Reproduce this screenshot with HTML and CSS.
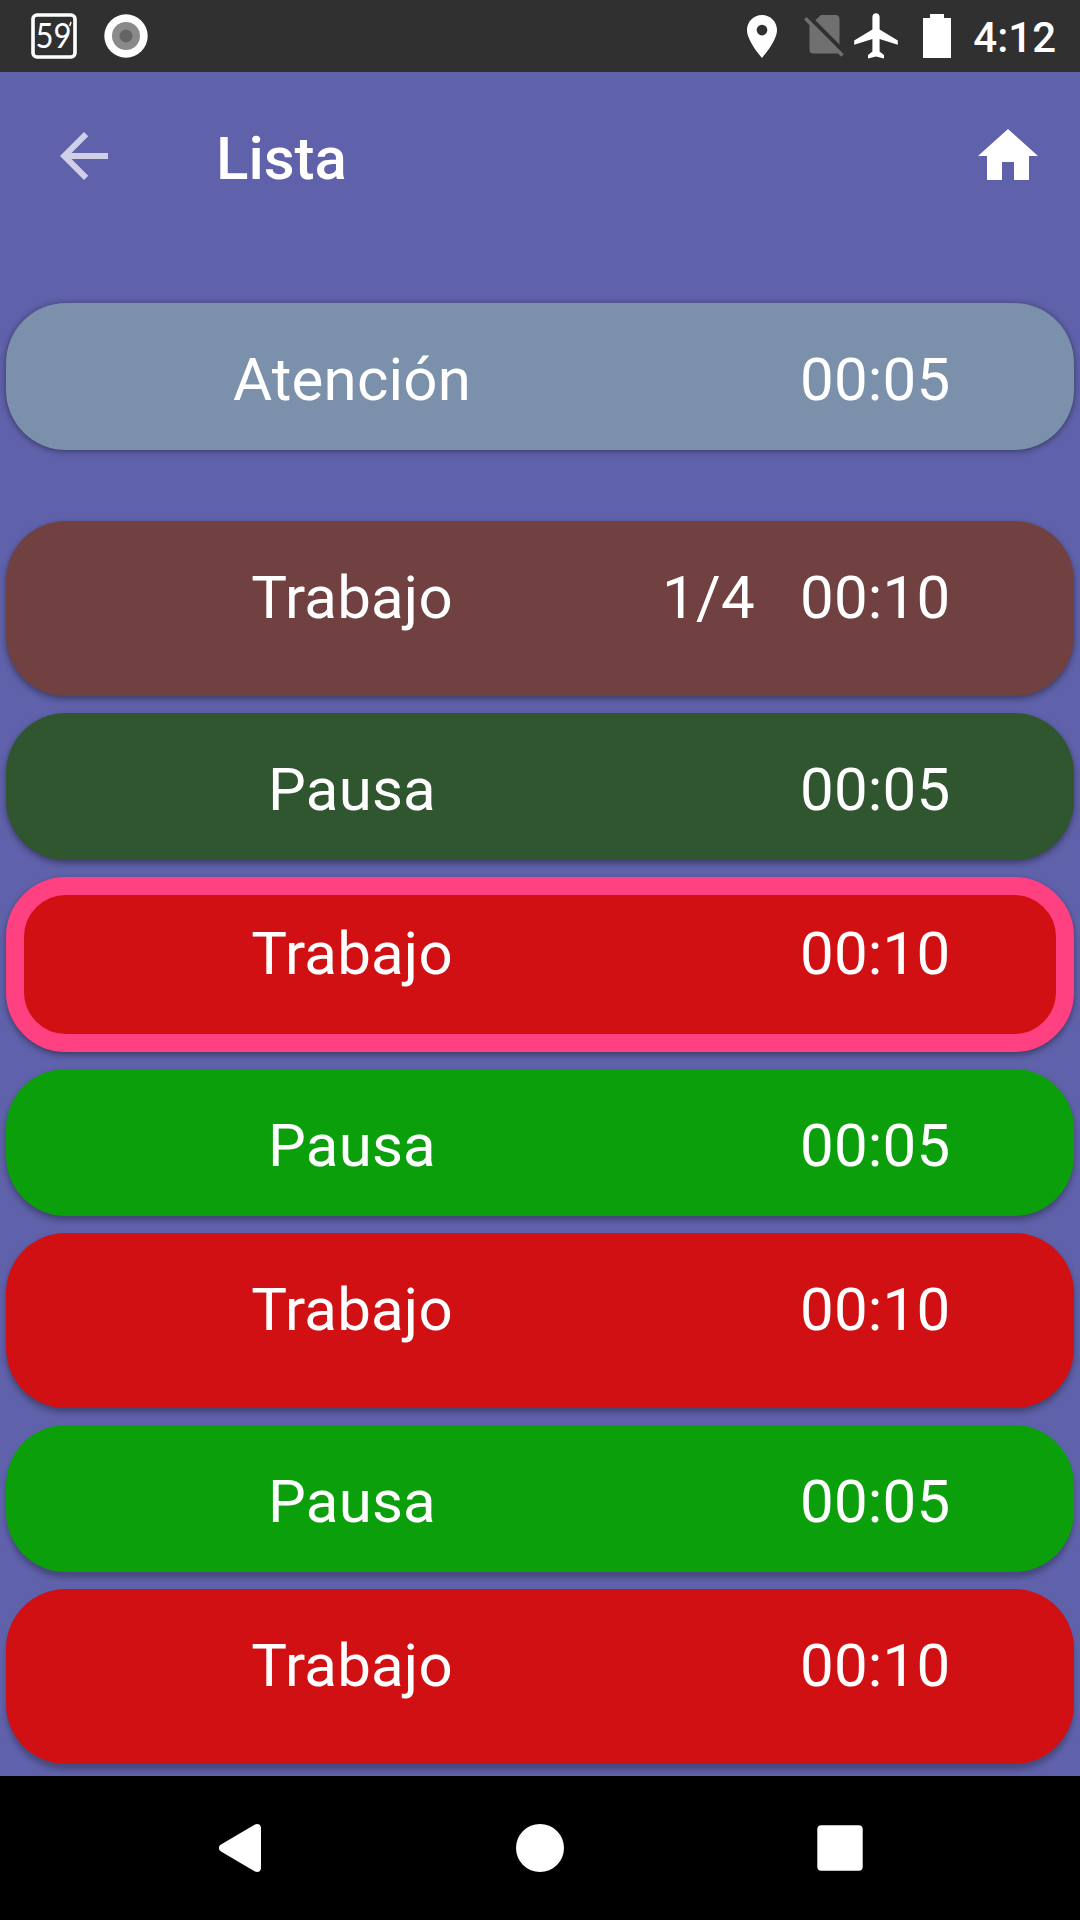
FILE: index.html
```html
<!DOCTYPE html>
<html lang="es">
<head>
  <meta charset="UTF-8" />
  <meta name="viewport" content="width=device-width, initial-scale=1.0" />
  <title>Lista</title>
  <link rel="stylesheet" href="styles.css">
</head>
<body>
  <!-- Barra de estado -->
  <div class="status-bar">
    <div class="notifications">
      <svg width="46" height="46" viewBox="0 0 46 46">
        <rect x="2" y="2" width="42" height="42" rx="4" fill="none" stroke="#fff" stroke-width="3.600" />
        <text class="badge-number" x="4.500" y="34.500" textLength="36" lengthAdjust="spacingAndGlyphs">59</text>
        <path d="M40 9l-1.300 4" stroke="#fff" stroke-width="1.500" />
      </svg>
      <svg width="44" height="44" viewBox="0 0 44 44">
        <circle cx="22" cy="22" r="21.700" fill="#fff" />
        <circle cx="22" cy="22" r="14" fill="#8a8a8a" />
        <circle cx="22" cy="22" r="6.500" fill="#646464" />
      </svg>
    </div>
    <div class="system-icons">
      <svg class="icon-place" width="30" height="43" viewBox="5 2 14 20">
        <path fill="#fff" d="M12 2C8.130 2 5 5.130 5 9c0 5.250 7 13 7 13s7-7.750 7-13c0-3.870-3.130-7-7-7zm0 9.500a2.500 2.500 0 0 1 0-5 2.500 2.500 0 0 1 0 5z" />
      </svg>
      <svg class="icon-sim" width="40" height="42" viewBox="0 0 40 42">
        <path fill="#707070" d="M17 0h14.500a4 4 0 0 1 4 4v25.500L11.300 5.300zM5.500 9.500L34 38a4 4 0 0 1-2 .5H9.500a4 4 0 0 1-4-4z" />
        <path d="M1.300 3.300L38.500 40.500" stroke="#707070" stroke-width="3.600" />
      </svg>
      <svg class="icon-plane" width="44" height="46" viewBox="0 0 44 46">
        <path fill="#fff" d="M22 .3c-2 0-3.600 1.600-3.600 3.600V16.500L.2 27.500v4.300l18.200-5.800v12.400L14 42v3.600l8-2 8 2V42l-4.400-3.600V26l18.200 5.800v-4.300L25.600 16.500V3.900c0-2-1.600-3.600-3.600-3.600z" />
      </svg>
      <svg class="icon-battery" width="28" height="44" viewBox="0 0 28 44">
        <path fill="#fff" d="M7 0h14v4h7v40H0V4h7z" />
      </svg>
      <span class="clock">4:12</span>
    </div>
  </div>

  <!-- Cabecera -->
  <header class="toolbar">
    <svg class="back" width="72" height="72" viewBox="0 0 24 24">
      <path d="M20 11H7.830l5.590-5.590L12 4l-8 8 8 8 1.410-1.410L7.830 13H20v-2z" />
    </svg>
    <h1>Lista</h1>
    <svg class="home" width="72" height="72" viewBox="0 0 24 24">
      <path d="M10 20v-6h4v6h5v-8h3L12 3 2 12h3v8z" />
    </svg>
  </header>

  <!-- Lista de intervalos -->
  <main class="list">
    <div class="card attention">
      <span class="name">Atención</span>
      <span class="round"></span>
      <span class="time">00:05</span>
    </div>
    <div class="card work done">
      <span class="name">Trabajo</span>
      <span class="round">1/4</span>
      <span class="time">00:10</span>
    </div>
    <div class="card rest done">
      <span class="name">Pausa</span>
      <span class="round"></span>
      <span class="time">00:05</span>
    </div>
    <div class="card work current">
      <span class="name">Trabajo</span>
      <span class="round"></span>
      <span class="time">00:10</span>
    </div>
    <div class="card rest">
      <span class="name">Pausa</span>
      <span class="round"></span>
      <span class="time">00:05</span>
    </div>
    <div class="card work">
      <span class="name">Trabajo</span>
      <span class="round"></span>
      <span class="time">00:10</span>
    </div>
    <div class="card rest">
      <span class="name">Pausa</span>
      <span class="round"></span>
      <span class="time">00:05</span>
    </div>
    <div class="card work">
      <span class="name">Trabajo</span>
      <span class="round"></span>
      <span class="time">00:10</span>
    </div>
  </main>

  <!-- Botones de navegación -->
  <nav class="nav-bar">
    <svg width="42" height="48" viewBox="0 0 42 48">
      <path fill="#fff" d="M2 20.600L35.500.8c3-1.700 6.500-.5 6.500 3v40.400c0 3.500-3.500 4.700-6.500 3L2 27.400c-2.700-1.600-2.700-5.200 0-6.800z" />
    </svg>
    <svg width="48" height="48" viewBox="0 0 48 48">
      <circle cx="24" cy="24" r="24" fill="#fff" />
    </svg>
    <svg width="46" height="46" viewBox="0 0 46 46">
      <rect x=".3" y=".3" width="45.400" height="45.400" rx="4" fill="#fff" />
    </svg>
  </nav>
</body>
</html>
```
FILE: styles.css
```css
* {
  box-sizing: border-box;
}

body {
  margin: 0;
  height: 1920px;
  display: flex;
  flex-direction: column;
  overflow: hidden;
  font-family: Roboto, sans-serif;
  color: #fff;
  background-color: #5f61aa;
}

svg {
  display: block;
  flex: none;
}

.status-bar {
  height: 72px;
  padding: 0 24px 0 31px;
  display: flex;
  align-items: center;
  justify-content: space-between;
  background-color: #303030;
}

.notifications,
.system-icons {
  display: flex;
  align-items: center;
}

.notifications {
  gap: 27px;
}

.badge-number {
  font-family: Lato, sans-serif;
  font-size: 34px;
  font-weight: 400;
  fill: #fff;
}

.icon-sim {
  margin-left: 27px;
  margin-right: 10px;
}

.icon-battery {
  margin-left: 25px;
}

.clock {
  margin-left: 22px;
  padding-top: 3px;
  font-size: 42px;
  font-weight: 500;
  line-height: 50px;
}

.toolbar {
  height: 168px;
  padding: 0 36px 0 48px;
  display: flex;
  align-items: center;
}

.toolbar h1 {
  margin: 0 auto 0 96px;
  padding-top: 5px;
  font-size: 60px;
  font-weight: 500;
  line-height: 70px;
}

.toolbar svg {
  fill: #fff;
}

.toolbar .back {
  opacity: 0.7;
}

.list {
  flex: 1;
  padding: 63px 6px 0;
  display: flex;
  flex-direction: column;
  gap: 17px;
  overflow: hidden;
}

.card {
  height: 147px;
  padding: 42px 0 0 40px;
  display: grid;
  grid-template-columns: 612px 142px 1fr;
  align-items: start;
  flex: none;
  border-radius: 60px;
  font-size: 60px;
  line-height: 70px;
  letter-spacing: 0.2px;
  box-shadow: 0 3px 6px rgba(0, 0, 0, 0.38);
}

.card .name {
  text-align: center;
}

.card .round {
  padding-left: 4px;
}

.attention {
  margin-bottom: 54px;
  background-color: #7b90aa;
  box-shadow: 0 1px 6px rgba(0, 0, 0, 0.45);
}

.work {
  height: 175px;
  background-color: #d11013;
}

.rest {
  background-color: #0ba00b;
}

.work.done {
  background-color: #714141;
}

.rest.done {
  background-color: #2f562e;
}

.current {
  padding: 24px 0 0 22px;
  border: 18px solid #ff4081;
}

/* la sombra cae más cuanto más abajo está la tarjeta */
.card:nth-child(n + 5) {
  box-shadow: 0 4px 6px rgba(0, 0, 0, 0.32);
}

.card:nth-child(n + 7) {
  box-shadow: 0 6px 5px rgba(0, 0, 0, 0.24);
}

.nav-bar {
  height: 144px;
  padding: 0 90px;
  display: grid;
  grid-template-columns: repeat(3, 1fr);
  align-items: center;
  justify-items: center;
  background-color: #000;
}
```
